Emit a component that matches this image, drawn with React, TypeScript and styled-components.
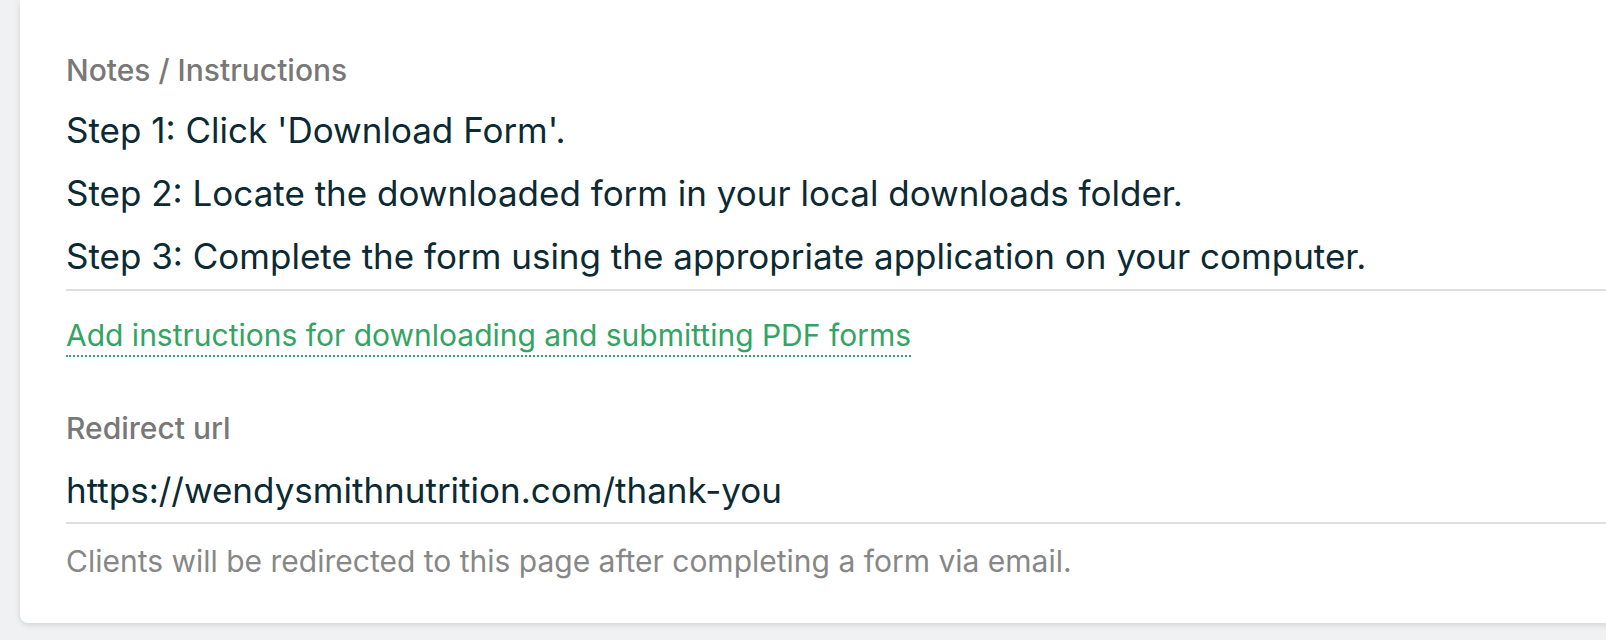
import styled, { createGlobalStyle } from 'styled-components'

const GlobalStyle = createGlobalStyle`
    html, body {
        margin: 0;
        padding: 0;
        background: #f0f1f3;
        overflow: hidden;
    }
    body {
        font-family: Inter, "Noto Sans", sans-serif;
        -webkit-font-smoothing: antialiased;
    }
`

const steps = [
    "Step 1: Click 'Download Form'.",
    'Step 2: Locate the downloaded form in your local downloads folder.',
    'Step 3: Complete the form using the appropriate application on your computer.',
]

export default function App() {
    return (
        <>
            <GlobalStyle />
            <Page>
                <Card>
                    <Field>
                        <Label>Notes / Instructions</Label>
                        <NotesBox>
                            {steps.map(step => (
                                <StepLine key={step}>{step}</StepLine>
                            ))}
                        </NotesBox>
                        <HelpLink href="#">Add instructions for downloading and submitting PDF forms</HelpLink>
                    </Field>

                    <Field $gap={55}>
                        <Label>Redirect url</Label>
                        <ValueBox>https://wendysmithnutrition.com/thank-you</ValueBox>
                        <Hint>Clients will be redirected to this page after completing a form via email.</Hint>
                    </Field>
                </Card>
            </Page>
        </>
    )
}

const Page = styled.div`
    display: flex;
    height: 640px;
    padding: 0 0 17px 20px;
    box-sizing: border-box;
`

const Card = styled.div`
    flex: 1;
    margin-right: -40px;
    background: #fff;
    border-radius: 0 0 8px 8px;
    box-shadow: 0 2px 6px rgba(0, 0, 0, 0.12);
    padding: 54px 0 0 46px;
    display: flex;
    flex-direction: column;
`

const Field = styled.div<{ $gap?: number }>`
    display: flex;
    flex-direction: column;
    align-items: flex-start;
    margin-top: ${p => p.$gap ?? 0}px;
`

const Label = styled.div`
    font-size: 30px;
    line-height: 32px;
    font-weight: 500;
    color: #787878;
`

const NotesBox = styled.div`
    align-self: stretch;
    margin-top: 22px;
    padding-bottom: 11px;
    border-bottom: 2px solid #dedede;
`

const StepLine = styled.div`
    font-size: 35px;
    line-height: 44px;
    color: #0b2a33;
    & + & {
        margin-top: 19px;
    }
`

const HelpLink = styled.a`
    margin-top: 27px;
    padding-bottom: 3px;
    font-size: 30px;
    line-height: 34px;
    color: #33a463;
    text-decoration: none;
    border-bottom: 2px dotted #33a463;
`

const ValueBox = styled.div`
    align-self: stretch;
    margin-top: 24px;
    padding-bottom: 10px;
    border-bottom: 2px solid #dedede;
    font-size: 35px;
    line-height: 44px;
    color: #0b2a33;
`

const Hint = styled.div`
    margin-top: 22px;
    font-size: 30px;
    line-height: 30px;
    color: #878787;
`
